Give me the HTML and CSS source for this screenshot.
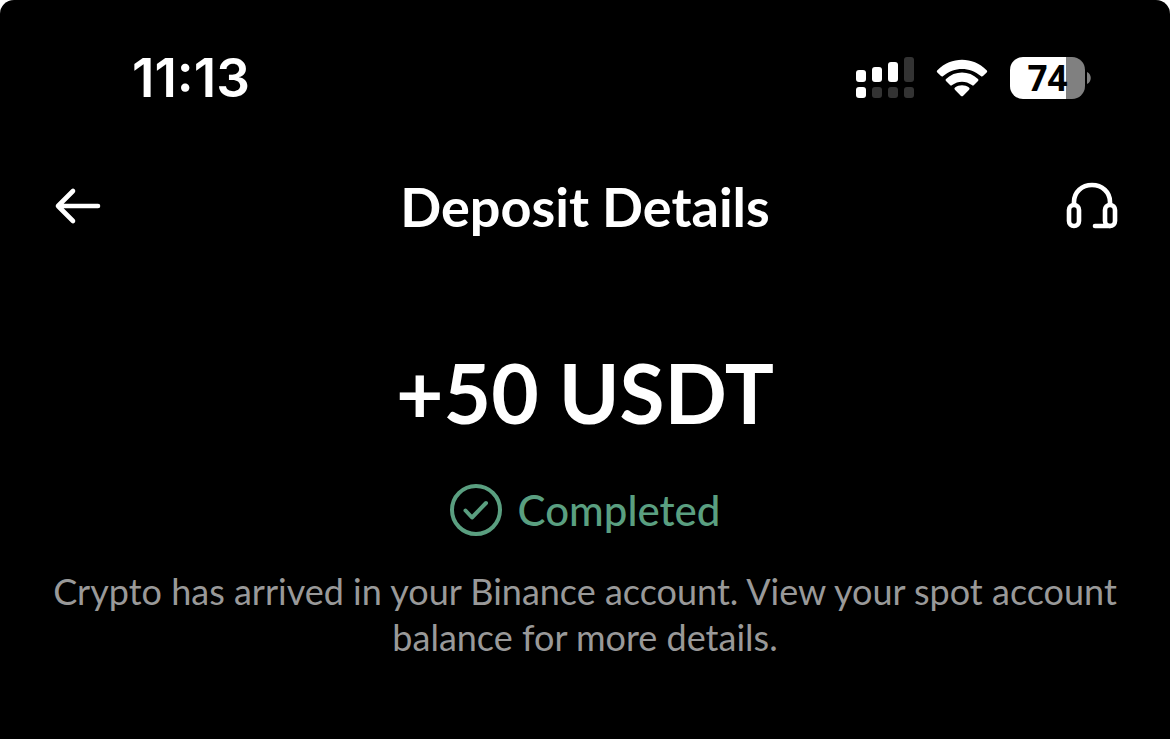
FILE: index.html
```html
<!DOCTYPE html>
<html lang="en">
<head>
    <meta charset="UTF-8">
    <meta name="viewport" content="width=device-width, initial-scale=1.0">
    <title>Deposit Details</title>
    <link rel="stylesheet" href="styles.css">
</head>
<body>
    <div class="screen">
        <div class="status-bar">
            <time class="clock">11:13</time>
            <div class="status-icons">
                <svg class="signal" width="58" height="42" viewBox="0 0 58 42" role="img" aria-label="Signal">
                    <g fill="#fff">
                        <rect x="0" y="13" width="10" height="12" rx="3"/>
                        <rect x="16" y="10" width="10" height="15" rx="3"/>
                        <rect x="32" y="5" width="10" height="20" rx="3"/>
                        <rect x="0" y="30" width="10" height="11" rx="3"/>
                    </g>
                    <g fill="#333">
                        <rect x="48" y="0" width="10" height="25" rx="3"/>
                        <rect x="16" y="30" width="10" height="11" rx="3"/>
                        <rect x="32" y="30" width="10" height="11" rx="3"/>
                        <rect x="48" y="30" width="10" height="11" rx="3"/>
                    </g>
                </svg>
                <svg class="wifi" width="52" height="38" viewBox="0 0 52 38" fill="#fff" role="img" aria-label="Wi-Fi">
                    <path d="M1.4 11.2Q0.2 12.2 1.3 13.4L5 17.1Q6.1 18 7.2 17C18 7.5 34 7.5 44.8 17Q45.9 18 47 17.1L50.7 13.4Q51.8 12.2 50.6 11.2C36.5-2.7 15.5-2.7 1.4 11.2Z"/>
                    <path d="M10 20Q9 21 10 22L14 26Q15 27 16.2 26C22 21.5 30 21.5 35.8 26Q37 27 38 26L42 22Q43 21 42 20C33 11.4 19 11.4 10 20Z"/>
                    <path d="M19 28.6Q17.8 29.7 18.9 30.8L25 36.9Q26 37.8 27 36.9L33.1 30.8Q34.2 29.7 33 28.6C29 25.4 23 25.4 19 28.6Z"/>
                </svg>
                <div class="battery">
                    <div class="battery-body"><span>74</span></div>
                    <svg width="4" height="12" viewBox="0 0 4 12" fill="#808080" aria-hidden="true">
                        <path d="M0 0C5 2 5 10 0 12Z"/>
                    </svg>
                </div>
            </div>
        </div>

        <header class="header">
            <button class="icon-button" type="button" aria-label="Back">
                <svg width="52" height="52" viewBox="0 0 52 52" fill="none" stroke="#fff" stroke-width="4.6" stroke-linecap="round" stroke-linejoin="round">
                    <path d="M46 25H6M21 10L6 25L21 40"/>
                </svg>
            </button>
            <h1 class="title">Deposit Details</h1>
            <button class="icon-button" type="button" aria-label="Support">
                <svg width="52" height="52" viewBox="0 0 52 52" fill="none" stroke="#fff" stroke-width="4.6" stroke-linecap="round" stroke-linejoin="round">
                    <path d="M8 23V21C8 11 16 4 26 4S44 11 44 21V23"/>
                    <rect x="3" y="24" width="10" height="21" rx="5"/>
                    <rect x="39" y="24" width="10" height="21" rx="5"/>
                    <path d="M44 45H29"/>
                </svg>
            </button>
        </header>

        <main class="details">
            <p class="amount">+50 USDT</p>
            <div class="state">
                <svg width="52" height="52" viewBox="0 0 52 52" fill="none" stroke="#5a9f80" stroke-width="4" stroke-linecap="round" stroke-linejoin="round" aria-hidden="true">
                    <circle cx="26" cy="26" r="24"/>
                    <path d="M15.5 26.5L22 33.5L36 19"/>
                </svg>
                <span>Completed</span>
            </div>
            <p class="description">Crypto has arrived in your Binance account. View your spot account balance for more details.</p>
        </main>
    </div>
</body>
</html>
```
FILE: styles.css
```css
body {
    margin: 0;
    background-color: white;
    font-family: 'Lato', 'Open Sans', sans-serif;
    color: white;
}
.screen {
    box-sizing: border-box;
    min-height: 100vh;
    background-color: black;
    border-radius: 14px 14px 0 0;
}
.status-bar {
    display: flex;
    justify-content: space-between;
    align-items: center;
    padding: 48px 79px 0 132px;
}
.clock {
    font-family: 'Inter', sans-serif;
    font-size: 53px;
    font-weight: 600;
    line-height: 60px;
}
.status-icons {
    display: flex;
    align-items: center;
    gap: 22px;
}
.battery {
    display: flex;
    align-items: center;
    gap: 2px;
}
.battery-body {
    width: 75px;
    height: 42px;
    border-radius: 13px;
    background: linear-gradient(to right, white 75%, #808080 75%);
    color: black;
    font-family: 'Open Sans', sans-serif;
    font-size: 35px;
    font-weight: 700;
    line-height: 41px;
    text-align: center;
}
.header {
    display: flex;
    justify-content: space-between;
    align-items: center;
    padding: 67px 52px 0;
}
.icon-button {
    width: 52px;
    height: 52px;
    padding: 0;
    border: none;
    background: none;
    cursor: pointer;
}
.icon-button svg {
    display: block;
}
.title {
    margin: 0;
    font-size: 54px;
    font-weight: 700;
    line-height: 64px;
}
.details {
    padding: 105px 40px 0;
    text-align: center;
}
.amount {
    margin: 0;
    font-size: 82px;
    font-weight: 700;
    line-height: 96px;
}
.state {
    display: flex;
    justify-content: center;
    align-items: center;
    gap: 16px;
    margin-top: 44px;
    color: #5a9f80;
    font-size: 42px;
    font-weight: 500;
    line-height: 52px;
}
.description {
    margin: 32px 0 0;
    color: #999;
    font-size: 36px;
    line-height: 46px;
}
```
